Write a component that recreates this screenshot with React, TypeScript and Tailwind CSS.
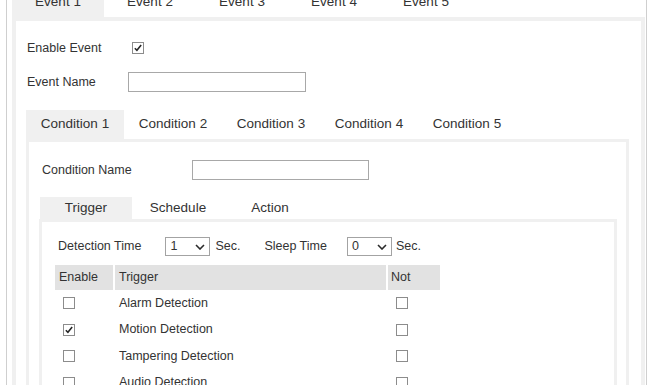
import React from "react";

const eventTabs = ["Event 1", "Event 2", "Event 3", "Event 4", "Event 5"];
const conditionTabs = ["Condition 1", "Condition 2", "Condition 3", "Condition 4", "Condition 5"];
const triggerTabs = ["Trigger", "Schedule", "Action"];

const triggers = [
  { name: "Alarm Detection", enabled: false },
  { name: "Motion Detection", enabled: true },
  { name: "Tampering Detection", enabled: false },
  { name: "Audio Detection", enabled: false },
];

function CheckBox({ checked }: { checked?: boolean }) {
  return (
    <span className="flex h-[12px] w-[12px] items-center justify-center border border-[#8c8c8c] bg-white">
      {checked && (
        <svg viewBox="0 0 12 12" className="h-[10px] w-[10px]">
          <path d="M2.2 6.3 L4.7 8.8 L9.8 2.4" stroke="#262626" strokeWidth="1.9" fill="none" />
        </svg>
      )}
    </span>
  );
}

function Select({ value }: { value: string }) {
  return (
    <div className="flex h-[19px] w-[45px] items-center justify-between border border-[#a3a3a3] bg-white pl-[4px] pr-[4px]">
      <span className="leading-none">{value}</span>
      <svg viewBox="0 0 10 6" className="h-[6px] w-[10px]">
        <path d="M1 1 L5 5 L9 1" stroke="#2b2b2b" strokeWidth="1.6" fill="none" />
      </svg>
    </div>
  );
}

function Tabs({ labels, width, height }: { labels: string[]; width: string; height: string }) {
  return (
    <div className={`flex shrink-0 ${height} text-[13.5px]`}>
      {labels.map((label, i) => (
        <div key={label} className={`flex ${width} items-center justify-center ${i === 0 ? "bg-[#f0f0f0]" : ""}`}>
          {label}
        </div>
      ))}
    </div>
  );
}

export default function App() {
  return (
    <div className="h-[385px] w-[650px] overflow-hidden bg-white text-[12.5px] text-[#333] [font-family:'Liberation_Sans',Arial,sans-serif]">
      <div className="ml-[6px] -mt-[13px] min-h-[400px] w-[641px] border-x border-[#cfcfcf] pl-[5px] pr-px">
        <Tabs labels={eventTabs} width="w-[92px]" height="h-[30px]" />

        <div className="h-[380px] border-[4px] border-b-0 border-[#f0f0f0] bg-white pl-[10px] pr-[12px] pt-[17px]">
          <div className="flex h-[20px] items-center pl-px">
            <span className="w-[105px]">Enable Event</span>
            <CheckBox checked />
          </div>
          <div className="mt-[14px] flex h-[20px] items-center pl-px">
            <span className="w-[101px]">Event Name</span>
            <div className="h-[20px] w-[178px] border border-[#a8a8a8]" />
          </div>

          <div className="mt-[18px]">
            <Tabs labels={conditionTabs} width="w-[98px]" height="h-[29px]" />
          </div>

          <div className="h-[260px] border-[3px] border-b-0 border-[#f0f0f0] pt-[18px]">
            <div className="flex h-[20px] items-center pl-[13px]">
              <span className="w-[150px]">Condition Name</span>
              <div className="h-[20px] w-[177px] border border-[#a8a8a8]" />
            </div>

            <div className="ml-[10px] mr-[9px]">
              <div className="mt-[17px] pl-px">
                <Tabs labels={triggerTabs} width="w-[92px]" height="h-[22px]" />
              </div>

              <div className="h-[200px] border-[3px] border-b-0 border-[#f0f0f0] pl-[13px] pt-[15px]">
                <div className="flex h-[19px] items-center pl-[3px]">
                  <span>Detection Time</span>
                  <div className="ml-[24px]">
                    <Select value="1" />
                  </div>
                  <span className="ml-[5px]">Sec.</span>
                  <span className="ml-[24px]">Sleep Time</span>
                  <div className="ml-[20px]">
                    <Select value="0" />
                  </div>
                  <span className="ml-[4px]">Sec.</span>
                </div>

                <div className="mt-[9px]">
                  <div className="flex h-[25px] gap-[2px]">
                    <div className="flex w-[58px] items-center bg-[#e2e2e2] pl-[4px]">Enable</div>
                    <div className="flex w-[271px] items-center bg-[#e2e2e2] pl-[4px]">Trigger</div>
                    <div className="flex w-[52px] items-center bg-[#e2e2e2] pl-[3px]">Not</div>
                  </div>
                  {triggers.map((t) => (
                    <div key={t.name} className="flex h-[26.5px] items-center gap-[2px]">
                      <div className="flex w-[58px] items-center pl-[8px]">
                        <CheckBox checked={t.enabled} />
                      </div>
                      <div className="w-[271px] pl-[4px]">{t.name}</div>
                      <div className="flex w-[52px] items-center pl-[8px]">
                        <CheckBox />
                      </div>
                    </div>
                  ))}
                </div>
              </div>
            </div>
          </div>
        </div>
      </div>
    </div>
  );
}
